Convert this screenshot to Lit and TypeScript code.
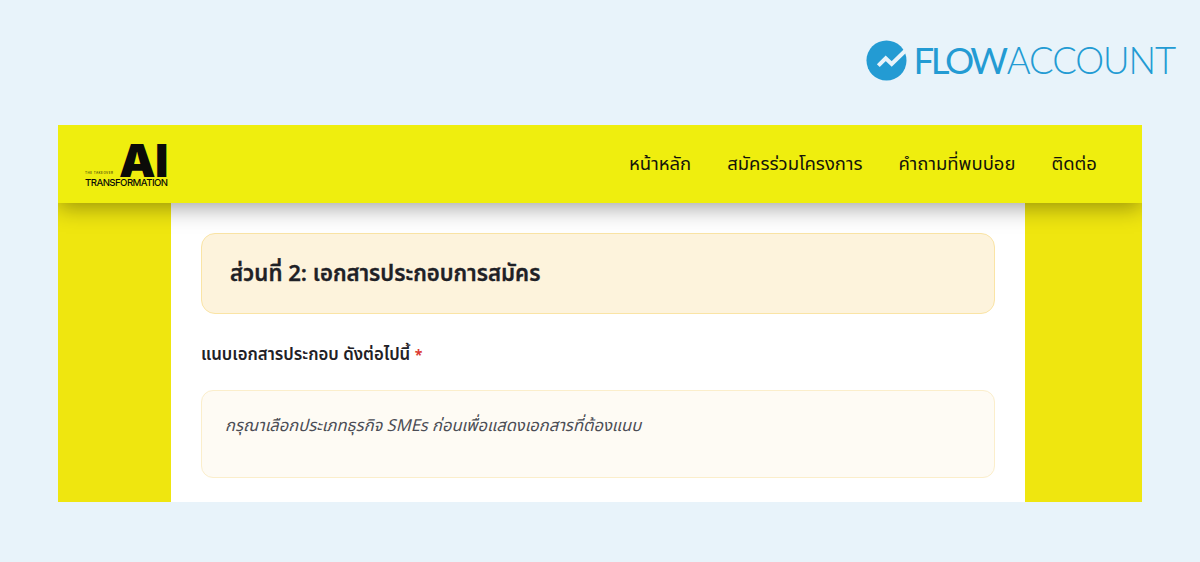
import { LitElement, html, css } from "lit";
import { customElement } from "lit/decorators.js";

const THAI = css`"Noto Sans Thai", "Noto Sans", "Noto Sans CJK SC", "DejaVu Sans", sans-serif`;

@customElement("app-root")
export class AppRoot extends LitElement {
  static styles = css`
    :host { display: block; width: 1200px; height: 562px; overflow: hidden; background: #e8f3fa; font-family: "Noto Sans", "DejaVu Sans", sans-serif; }
    .top { height: 125px; display: flex; justify-content: flex-end; box-sizing: border-box; padding: 40px 25px 0 0; }
    .brand { display: flex; align-items: center; height: 41px; gap: 7px; color: #239bd3; font-family: "Lato", sans-serif; }
    .mark { width: 41px; height: 41px; display: block; }
    .word { display: flex; font-size: 36.5px; line-height: 41px; white-space: nowrap; }
    .word b { font-weight: 400; letter-spacing: -3.4px; }
    .word span { font-weight: 300; letter-spacing: -1.1px; margin-left: 2px; }
    .frame { margin: 0 58px; height: 377px; background: #efe60f; overflow: hidden; display: flex; flex-direction: column; }
    .head { height: 78px; flex: none; position: relative; z-index: 2; background: #efee0e; box-shadow: 0 4px 22px rgba(0,0,0,.38); display: flex; align-items: center; justify-content: space-between; padding: 0 45px 0 27px; }
    .ai { width: 83px; display: flex; flex-direction: column; color: #0b0b08; font-family: "Inter", "Liberation Sans", sans-serif; margin-top: 3px; }
    .ai-row { display: flex; align-items: flex-end; justify-content: space-between; height: 33px; }
    .ai-tiny { font-size: 3px; line-height: 4px; white-space: nowrap; letter-spacing: .5px; margin-bottom: 2px; }
    .ai-big { font-size: 46px; line-height: 33px; font-weight: 900; letter-spacing: -.5px; }
    .ai-small { font-size: 9.6px; line-height: 10px; font-weight: 500; letter-spacing: -.55px; white-space: nowrap; margin-top: 1px; }
    nav { display: flex; gap: 36px; font-family: ${THAI}; font-size: 18.5px; color: #14140a; }
    .body { flex: 1; margin: 0 117px 0 113px; background: #fff; padding: 30px 30px 0; display: flex; flex-direction: column; }
    .section { height: 81px; box-sizing: border-box; border: 1px solid #fae4a5; border-radius: 14px; background: #fdf3dc; display: flex; align-items: center; padding: 0 28px; font-family: ${THAI}; font-size: 22.2px; font-weight: 600; color: #1f2126; -webkit-text-stroke: .3px #1f2126; }
    .label { margin-top: 31px; height: 20px; line-height: 20px; font-family: ${THAI}; font-size: 16.8px; font-weight: 600; color: #1f2126; }
    .label i { font-style: normal; font-size: 14px; font-weight: 700; color: #dc3b34; }
    .note { margin-top: 25px; height: 88px; box-sizing: border-box; border: 1px solid #fbeecb; border-radius: 12px; background: #fefbf4; padding: 24px 23px; font-family: ${THAI}; font-size: 16.5px; line-height: 22px; font-style: italic; color: #4b4d55; }
  `;
  render() {
    return html`
      <div class="top">
        <div class="brand">
          <svg class="mark" viewBox="0 0 41 41">
            <circle cx="20.5" cy="20.5" r="20" fill="#239bd3"/>
            <path d="M12.3 25.7 L19.7 18.3 L25.7 24 L39 11" fill="none" stroke="#e8f3fa" stroke-width="4"/>
          </svg>
          <div class="word"><b>FLOW</b><span>ACCOUNT</span></div>
        </div>
      </div>
      <div class="frame">
        <header class="head">
          <div class="ai">
            <div class="ai-row"><span class="ai-tiny">THE TAKEOVER</span><span class="ai-big">AI</span></div>
            <div class="ai-small">TRANSFORMATION</div>
          </div>
          <nav>
            <span>หน้าหลัก</span>
            <span>สมัครร่วมโครงการ</span>
            <span>คำถามที่พบบ่อย</span>
            <span>ติดต่อ</span>
          </nav>
        </header>
        <main class="body">
          <div class="section">ส่วนที่ 2: เอกสารประกอบการสมัคร</div>
          <div class="label">แนบเอกสารประกอบ ดังต่อไปนี้ <i>*</i></div>
          <div class="note">กรุณาเลือกประเภทธุรกิจ SMEs ก่อนเพื่อแสดงเอกสารที่ต้องแนบ</div>
        </main>
      </div>
    `;
  }
}
